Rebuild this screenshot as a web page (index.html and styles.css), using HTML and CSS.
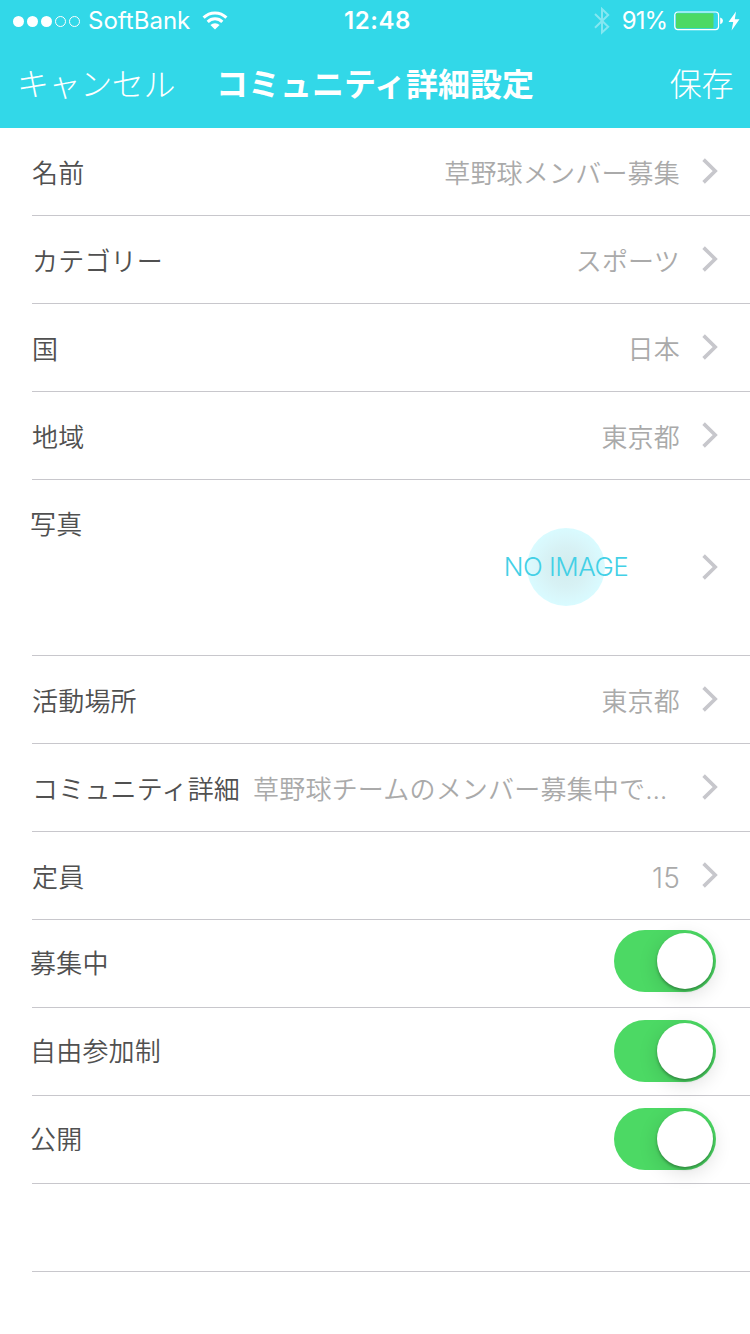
FILE: index.html
```
<!DOCTYPE html>
<html lang="ja">
<head>
    <meta charset="UTF-8">
    <meta name="viewport" content="width=device-width, initial-scale=1.0">
    <title>コミュニティ詳細設定</title>
    <link rel="stylesheet" href="styles.css">
</head>
<body>
    <svg class="defs" width="0" height="0">
        <symbol id="chevron" viewBox="0 0 16 26">
            <path d="M1.6 1.6 L13.2 13 L1.6 24.4" fill="none" stroke="#c7c7cc" stroke-width="3.6"/>
        </symbol>
    </svg>

    <header class="header">
        <div class="status-bar">
            <div class="status-left">
                <div class="signal">
                    <span class="dot"></span>
                    <span class="dot"></span>
                    <span class="dot"></span>
                    <span class="dot empty"></span>
                    <span class="dot empty"></span>
                </div>
                <span class="carrier">SoftBank</span>
                <svg class="wifi" width="26" height="19" viewBox="0 0 26 19">
                    <g fill="none" stroke="#fff" stroke-width="3">
                        <path d="M1.6 6.6 A16.2 16.2 0 0 1 24.4 6.6"/>
                        <path d="M5.7 10.9 A10.3 10.3 0 0 1 20.3 10.9"/>
                    </g>
                    <path d="M13 18.6 L8.4 14 A6.6 6.6 0 0 1 17.6 14 Z" fill="#fff"/>
                </svg>
            </div>
            <span class="clock">12:48</span>
            <div class="status-right">
                <svg class="bluetooth" width="16" height="28" viewBox="0 0 16 28">
                    <path d="M1 7 L14.2 19.8 L8 25.5 V2 L14.2 8 L1 20.8" fill="none" stroke="#fff" stroke-width="2"/>
                </svg>
                <span class="percent">91%</span>
                <svg class="battery" width="50" height="20" viewBox="0 0 50 20">
                    <rect x="0.75" y="1" width="43.8" height="17.6" rx="3" fill="none" stroke="#fff" stroke-width="1.2"/>
                    <rect x="2" y="2.3" width="37.5" height="15" rx="1" fill="#4cd964"/>
                    <path d="M46.2 6.4 Q49 7.2 49 9.8 Q49 12.4 46.2 13.2 Z" fill="#fff"/>
                </svg>
                <svg class="bolt" width="12" height="20" viewBox="0 0 12 20">
                    <path d="M8 0.5 L0.5 11 H5.2 L3.6 19.5 L11.5 8.3 H6.8 Z" fill="#fff"/>
                </svg>
            </div>
        </div>
        <nav class="nav-bar">
            <a class="nav-btn">キャンセル</a>
            <h1>コミュニティ詳細設定</h1>
            <a class="nav-btn save">保存</a>
        </nav>
    </header>

    <main class="list">
        <div class="row">
            <span class="label">名前</span>
            <span class="value">草野球メンバー募集</span>
            <svg class="chevron"><use href="#chevron"/></svg>
        </div>
        <div class="row">
            <span class="label">カテゴリー</span>
            <span class="value">スポーツ</span>
            <svg class="chevron"><use href="#chevron"/></svg>
        </div>
        <div class="row">
            <span class="label">国</span>
            <span class="value">日本</span>
            <svg class="chevron"><use href="#chevron"/></svg>
        </div>
        <div class="row">
            <span class="label">地域</span>
            <span class="value">東京都</span>
            <svg class="chevron"><use href="#chevron"/></svg>
        </div>
        <div class="row photo-row">
            <span class="label">写真</span>
            <div class="photo"><span>NO IMAGE</span></div>
            <svg class="chevron"><use href="#chevron"/></svg>
        </div>
        <div class="row">
            <span class="label">活動場所</span>
            <span class="value">東京都</span>
            <svg class="chevron"><use href="#chevron"/></svg>
        </div>
        <div class="row">
            <span class="label">コミュニティ詳細</span>
            <span class="value long">草野球チームのメンバー募集中で…</span>
            <svg class="chevron"><use href="#chevron"/></svg>
        </div>
        <div class="row">
            <span class="label">定員</span>
            <span class="value number">15</span>
            <svg class="chevron"><use href="#chevron"/></svg>
        </div>
        <div class="row switch-row first">
            <span class="label">募集中</span>
            <div class="switch"><span class="thumb"></span></div>
        </div>
        <div class="row switch-row">
            <span class="label">自由参加制</span>
            <div class="switch"><span class="thumb"></span></div>
        </div>
        <div class="row switch-row">
            <span class="label">公開</span>
            <div class="switch"><span class="thumb"></span></div>
        </div>
        <div class="row"></div>
    </main>
</body>
</html>
```
FILE: styles.css
```
:root {
    --primary-color: #32d8e8;
    --green: #4cd964;
    --label-color: #505050;
    --value-color: #aaaaaa;
    --line-color: #c8c7cc;
}

* {
    margin: 0;
    padding: 0;
    box-sizing: border-box;
}

body {
    font-family: Inter, 'Noto Sans CJK JP', sans-serif;
    font-weight: 350;
    font-size: 26px;
    background-color: #fff;
    color: var(--label-color);
    height: 1334px;
    overflow: hidden;
}

svg {
    display: block;
    flex-shrink: 0;
}

.defs {
    display: none;
}

.header {
    height: 128px;
    background-color: var(--primary-color);
    color: #fff;
}

/* status bar */
.status-bar {
    display: grid;
    grid-template-columns: 1fr auto 1fr;
    align-items: center;
    height: 40px;
    padding: 1px 10px 0 13px;
    font-size: 24px;
    font-weight: 400;
    line-height: 40px;
}

.status-left,
.status-right {
    display: flex;
    align-items: center;
}

.status-right {
    justify-content: flex-end;
}

.signal {
    display: flex;
    gap: 3px;
    margin-right: 8px;
}

.dot {
    width: 11px;
    height: 11px;
    border-radius: 50%;
    background-color: #fff;
}

.dot.empty {
    background: none;
    border: 1px solid #fff;
}

.carrier {
    width: 102px;
    margin-right: 12px;
}

.wifi {
    margin-bottom: 2px;
}

.clock {
    margin-left: 2px;
    font-weight: 600;
    letter-spacing: 0.6px;
}

.bluetooth {
    opacity: 0.4;
    margin-right: 12px;
}

.percent {
    margin-right: 7px;
    letter-spacing: -1px;
}

.battery {
    margin-right: 4px;
}

/* navigation bar */
.nav-bar {
    display: grid;
    grid-template-columns: 1fr auto 1fr;
    align-items: center;
    height: 88px;
    padding: 0 17px 4px 17px;
    font-size: 32px;
    font-weight: 300;
}

.nav-btn {
    letter-spacing: -0.4px;
}

.nav-bar h1 {
    font-size: 32px;
    font-weight: 700;
}

.save {
    text-align: right;
}

/* settings list */
.list {
    padding-left: 32px;
}

.row {
    display: flex;
    align-items: center;
    height: 88px;
    padding-right: 32px;
    border-bottom: 1px solid var(--line-color);
    line-height: 40px;
}

.label {
    padding-top: 4px;
    letter-spacing: 0.2px;
    white-space: nowrap;
}

.value {
    flex: 1;
    padding-top: 4px;
    text-align: right;
    margin-right: 22px;
    color: var(--value-color);
    letter-spacing: 0.2px;
    white-space: nowrap;
}

.value.long {
    text-align: left;
    margin-left: 13px;
}

.value.number {
    font-size: 28px;
}

.chevron {
    width: 16px;
    height: 26px;
    margin-bottom: 1px;
}

.photo-row {
    height: 176px;
}

.photo-row .label {
    align-self: flex-start;
    margin: 21px 0 0 -2px;
}

.photo {
    display: flex;
    align-items: center;
    justify-content: center;
    width: 78px;
    height: 78px;
    margin: 0 97px 1px auto;
    border-radius: 50%;
    background: radial-gradient(closest-side, #d3ecee 0%, #d7f1f4 50%, #d9f7fb 80%, #d9fbff 100%);
    color: #43d0e6;
    letter-spacing: -0.5px;
    white-space: nowrap;
}

/* switches */
.switch-row {
    justify-content: space-between;
    padding-right: 34px;
}

.switch-row .label {
    padding-top: 1px;
    margin: 0 0 0 -2px;
}

.switch {
    display: flex;
    justify-content: flex-end;
    width: 102px;
    height: 62px;
    margin-bottom: 1px;
    padding: 3px;
    border-radius: 31px;
    background-color: var(--green);
}

.first .switch {
    margin-bottom: 5px;
}

.thumb {
    width: 56px;
    height: 56px;
    border-radius: 50%;
    background-color: #fff;
    box-shadow: 0 2px 3px rgba(0, 0, 0, 0.3), 0 5px 20px rgba(0, 0, 0, 0.14);
}
```
